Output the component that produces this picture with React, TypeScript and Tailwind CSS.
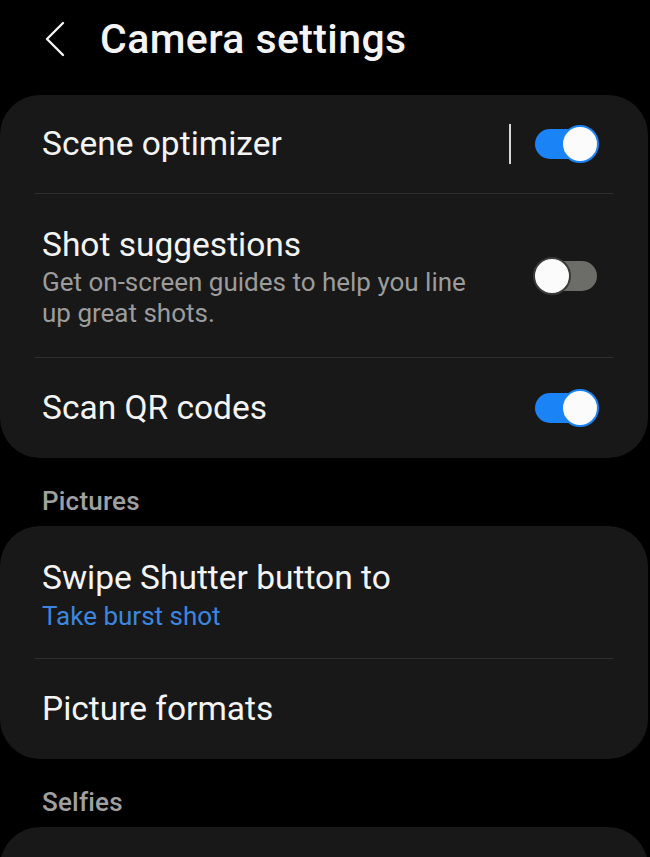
import { ReactNode } from "react";

type ToggleProps = {
  on: boolean;
};

const Toggle = ({ on }: ToggleProps) => {
  return (
    <div className="relative h-[38px] w-[66px] shrink-0">
      <div
        className={`absolute left-[2px] right-[2px] top-[4px] h-[30px] rounded-full ${
          on ? "bg-[#1a83f6]" : "bg-[#6c6c69]"
        }`}
      ></div>
      <div
        className={`absolute top-0 size-[38px] rounded-full border-2 bg-[#fbfbfb] ${
          on ? "right-0 border-[#1a83f6]" : "left-0 border-[#3a3a3a]"
        }`}
      ></div>
    </div>
  );
};

const Divider = () => <div className="mx-[35px] h-px bg-[#2e2e2e]"></div>;

const Card = ({ children }: { children: ReactNode }) => (
  <div className="mr-[2px] rounded-[40px] bg-[#181818]">{children}</div>
);

const SectionTitle = ({ label }: { label: string }) => (
  <p className="px-[42px] pb-[10px] pt-[28px] text-[26px] font-medium leading-[30px] tracking-[0.2px] text-[#a0a0a0]">
    {label}
  </p>
);

export default function App() {
  return (
    <div
      className="h-[857px] w-[650px] overflow-hidden bg-black text-[#f4f4f4]"
      style={{ fontFamily: "Roboto, 'Liberation Sans', sans-serif" }}
    >
      <div className="mb-[17px] flex h-[78px] items-center">
        <svg
          className="ml-[44px] h-[36px] w-[22px]"
          viewBox="0 0 22 36"
          fill="none"
          stroke="#f4f4f4"
          strokeWidth="2.4"
          strokeLinecap="round"
          strokeLinejoin="round"
        >
          <path d="M19 2 L3 18 L19 34" />
        </svg>
        <h1 className="ml-[34px] text-[41px] font-medium leading-[48px] tracking-[0.4px]">
          Camera settings
        </h1>
      </div>

      <Card>
        <div className="flex h-[98px] items-center pl-[42px] pr-[49px]">
          <p className="flex-1 text-[33.5px] leading-[40px]">Scene optimizer</p>
          <div className="mr-[22px] h-[40px] w-[2px] bg-[#d6d6d6]"></div>
          <Toggle on />
        </div>
        <Divider />
        <div className="flex h-[163px] items-center pl-[42px] pr-[49px]">
          <div className="flex-1 pr-[50px]">
            <p className="text-[33.5px] leading-[44px]">Shot suggestions</p>
            <p className="text-[26px] leading-[31px] text-[#9c9c9c]">
              Get on-screen guides to help you line up great shots.
            </p>
          </div>
          <Toggle on={false} />
        </div>
        <Divider />
        <div className="flex h-[100px] items-center pl-[42px] pr-[49px]">
          <p className="flex-1 text-[33.5px] leading-[40px]">Scan QR codes</p>
          <Toggle on />
        </div>
      </Card>

      <SectionTitle label="Pictures" />

      <Card>
        <div className="flex h-[132px] flex-col justify-center px-[42px] pt-[2px]">
          <p className="text-[33.5px] leading-[46px]">Swipe Shutter button to</p>
          <p className="text-[26px] leading-[31px] text-[#3d86df]">
            Take burst shot
          </p>
        </div>
        <Divider />
        <div className="flex h-[100px] items-center px-[42px]">
          <p className="text-[33.5px] leading-[40px]">Picture formats</p>
        </div>
      </Card>

      <SectionTitle label="Selfies" />

      <Card>
        <div className="h-[120px]"></div>
      </Card>
    </div>
  );
}
